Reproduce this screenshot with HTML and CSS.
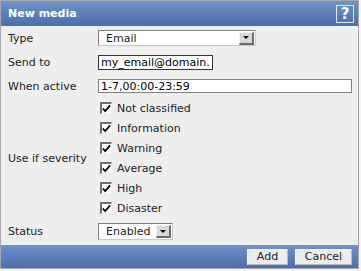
FILE: index.html
```html
<!DOCTYPE html>
<html lang="en">
  <head>
    <meta charset="UTF-8" />
    <title>New media</title>
    <link rel="stylesheet" href="styles.css">
  </head>
  <body>
    <div class="dialog">
      <div class="header">
        <h1>New media</h1>
        <span class="help">?</span>
      </div>

      <div class="form">
        <div class="row">
          <label class="label">Type</label>
          <div class="select type-select">
            <span class="value">Email</span>
            <span class="arrow"></span>
          </div>
        </div>

        <div class="row">
          <label class="label">Send to</label>
          <div class="input sendto">my_email@domain.</div>
        </div>

        <div class="row">
          <label class="label">When active</label>
          <div class="input period">1-7,00:00-23:59</div>
        </div>

        <div class="row severity-row">
          <label class="label">Use if severity</label>
          <div class="checks">
            <div class="check"><span class="box"><svg width="10" height="9" viewBox="0 0 10 9"><path d="M1 4.5 L3.5 7.5 L9 1" fill="none" stroke="#000" stroke-width="2"/></svg></span>Not classified</div>
            <div class="check"><span class="box"><svg width="10" height="9" viewBox="0 0 10 9"><path d="M1 4.5 L3.5 7.5 L9 1" fill="none" stroke="#000" stroke-width="2"/></svg></span>Information</div>
            <div class="check"><span class="box"><svg width="10" height="9" viewBox="0 0 10 9"><path d="M1 4.5 L3.5 7.5 L9 1" fill="none" stroke="#000" stroke-width="2"/></svg></span>Warning</div>
            <div class="check"><span class="box"><svg width="10" height="9" viewBox="0 0 10 9"><path d="M1 4.5 L3.5 7.5 L9 1" fill="none" stroke="#000" stroke-width="2"/></svg></span>Average</div>
            <div class="check"><span class="box"><svg width="10" height="9" viewBox="0 0 10 9"><path d="M1 4.5 L3.5 7.5 L9 1" fill="none" stroke="#000" stroke-width="2"/></svg></span>High</div>
            <div class="check"><span class="box"><svg width="10" height="9" viewBox="0 0 10 9"><path d="M1 4.5 L3.5 7.5 L9 1" fill="none" stroke="#000" stroke-width="2"/></svg></span>Disaster</div>
          </div>
        </div>

        <div class="row status-row">
          <label class="label">Status</label>
          <div class="select status-select">
            <span class="value">Enabled</span>
            <span class="arrow"></span>
          </div>
        </div>
      </div>

      <div class="footer">
        <button class="add">Add</button>
        <button class="cancel">Cancel</button>
      </div>
    </div>
  </body>
</html>
```

FILE: styles.css
```css
:root {
  --header-top: #7192c9;
  --header-bottom: #4a6eab;
  --panel-bg: #eeeeee;
  --text-color: #222;
}

* {
  margin: 0;
  padding: 0;
  box-sizing: border-box;
}

body {
  font-family: "DejaVu Sans", Verdana, sans-serif;
  font-size: 11px;
  color: var(--text-color);
  background-color: #f4f4f4;
}

.dialog {
  width: 359px;
  border: 1px solid #a8a8a8;
  background-color: var(--panel-bg);
  display: flex;
  flex-direction: column;
}

.header {
  height: 25px;
  padding: 0 4px 0 7px;
  display: flex;
  align-items: center;
  justify-content: space-between;
  background: linear-gradient(var(--header-top), var(--header-bottom));
}

.header h1 {
  font-size: 11px;
  font-weight: bold;
  color: white;
}

.help {
  width: 18px;
  height: 18px;
  border: 1px solid #e4eaf5;
  color: white;
  font-weight: bold;
  font-size: 15px;
  line-height: 16px;
  text-align: center;
}

.row {
  height: 24px;
  display: flex;
  align-items: center;
}

.label {
  width: 97px;
  padding-left: 7px;
}

.severity-row {
  height: 120px;
}

.status-row {
  height: 27px;
}

.select,
.input {
  height: 15px;
  background-color: white;
  display: flex;
  align-items: center;
  white-space: nowrap;
  overflow: hidden;
}

.select {
  border: 1px solid #7f7f7f;
  border-right-color: #c8c8c8;
  border-bottom-color: #c8c8c8;
  justify-content: space-between;
  padding: 0 1px 0 7px;
}

.type-select {
  width: 158px;
  height: 16px;
}

.status-select {
  width: 75px;
  height: 17px;
}

.arrow {
  width: 15px;
  height: 13px;
  background-color: #d8d8d8;
  border: 1px solid #f4f4f4;
  border-right: 2px solid #6a6a6a;
  border-bottom: 2px solid #6a6a6a;
  display: flex;
  align-items: center;
  justify-content: center;
}

.arrow::after {
  content: "";
  border-left: 3px solid transparent;
  border-right: 3px solid transparent;
  border-top: 3px solid #000;
}

.input {
  color: #000;
  padding-left: 2px;
}

.sendto {
  width: 115px;
  border: 1px solid #333;
}

.period {
  width: 254px;
  height: 14px;
  border: 1px solid #808080;
}

.checks {
  display: flex;
  flex-direction: column;
  padding-left: 2px;
}

.check {
  height: 20px;
  display: flex;
  align-items: center;
  gap: 5px;
}

.box {
  width: 12px;
  height: 12px;
  background-color: white;
  border: 1px solid #f0f0f0;
  border-top: 2px solid #6e6e6e;
  border-left: 2px solid #6e6e6e;
  display: flex;
  align-items: center;
  justify-content: center;
}

.footer {
  height: 23px;
  padding-right: 6px;
  display: flex;
  align-items: center;
  justify-content: flex-end;
  gap: 7px;
  background: linear-gradient(var(--header-top), var(--header-bottom));
}

button {
  height: 16px;
  font-family: inherit;
  font-size: 11px;
  color: var(--text-color);
  background-color: #ececec;
  border: 1px solid #f6f6f6;
  border-bottom-color: #b8b8b8;
  border-right-color: #b8b8b8;
  cursor: pointer;
}

.add {
  width: 41px;
}

.cancel {
  width: 57px;
}
```
